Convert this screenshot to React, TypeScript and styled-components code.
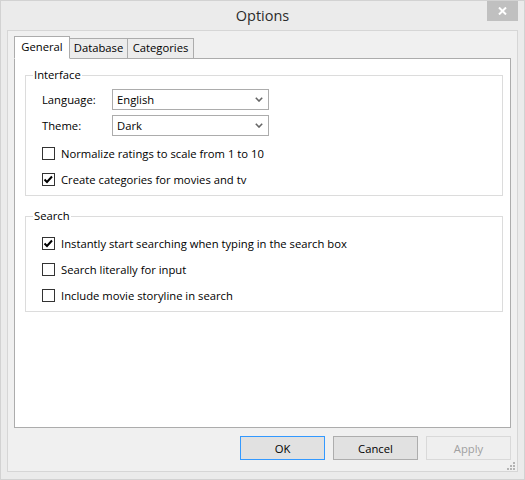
import React from "react";
import styled, { createGlobalStyle } from "styled-components";

const GlobalStyle = createGlobalStyle`
    html, body {
        margin: 0;
        padding: 0;
        background: #ebebeb;
    }
    * {
        box-sizing: border-box;
    }
`;

const FONT = `"Open Sans", "Noto Sans", sans-serif`;

const Window = styled.div`
    position: relative;
    width: 525px;
    height: 480px;
    display: flex;
    flex-direction: column;
    background: #ebebeb;
    border: 1px solid #d2d2d2;
    padding: 0 6px 7px 6px;
    font-family: ${FONT};
    font-size: 11.25px;
    color: #000;
`;

const TitleBar = styled.div`
    height: 29px;
    display: grid;
    grid-template-columns: 1fr auto 1fr;
    align-items: start;
`;

const Title = styled.div`
    grid-column: 2;
    font-size: 14.5px;
    line-height: 29px;
    color: #2b2b2b;
`;

const CloseButton = styled.div`
    grid-column: 3;
    justify-self: end;
    width: 31px;
    height: 20px;
    background: #c0c0c0;
    display: flex;
    align-items: center;
    justify-content: center;
`;

const Client = styled.div`
    position: relative;
    flex: 1;
    display: flex;
    flex-direction: column;
    background: #f0f0f0;
    border: 1px solid #d6d6d6;
    padding: 5px 6px 11px 6px;
`;

const TabStrip = styled.div`
    height: 23px;
    display: flex;
    align-items: flex-end;
    margin-bottom: -1px;
    position: relative;
    z-index: 1;
`;

const Tab = styled.div<{ selected?: boolean; width: number }>`
    width: ${props => props.width}px;
    height: ${props => (props.selected ? 23 : 21)}px;
    margin-left: ${props => (props.selected ? 0 : -1)}px;
    background: ${props => (props.selected ? "#fff" : "#ececec")};
    border: 1px solid #acacac;
    border-bottom-color: ${props => (props.selected ? "#fff" : "#acacac")};
    display: flex;
    justify-content: center;
    padding-top: ${props => (props.selected ? 2 : 1)}px;
    line-height: 16px;
    z-index: ${props => (props.selected ? 1 : 0)};
    &:first-child {
        margin-left: 0;
    }
`;

const Panel = styled.div`
    flex: 1;
    background: #fff;
    border: 1px solid #acacac;
    padding: 8px 7px 0 10px;
    display: flex;
    flex-direction: column;
    gap: 12px;
`;

const Group = styled.fieldset`
    margin: 0;
    border: 1px solid #dcdcdc;
    padding: 6px 0 3px 16px;
    min-width: 0;
`;

const Legend = styled.legend`
    margin-left: -9px;
    padding: 0 1px;
    line-height: 16px;
`;

const FieldRows = styled.div`
    display: flex;
    flex-direction: column;
    gap: 5px;
    margin-bottom: 4px;
`;

const FieldRow = styled.div`
    display: flex;
    align-items: center;
    height: 21px;
`;

const FieldLabel = styled.div`
    width: 70px;
`;

const Select = styled.div`
    width: 157px;
    height: 21px;
    border: 1px solid #acacac;
    background: #fff;
    display: flex;
    align-items: center;
    justify-content: space-between;
    padding: 0 5px 0 4px;
`;

const CheckRow = styled.div`
    display: flex;
    align-items: center;
    gap: 6px;
    height: 26px;
`;

const Box = styled.div`
    width: 13px;
    height: 13px;
    border: 1px solid #333;
    background: #fff;
    display: flex;
    align-items: center;
    justify-content: center;
`;

const ButtonRow = styled.div`
    display: flex;
    justify-content: flex-end;
    gap: 8px;
    margin-top: 8px;
`;

const Button = styled.div<{ primary?: boolean; disabled?: boolean }>`
    width: 85px;
    height: 24px;
    display: flex;
    align-items: center;
    justify-content: center;
    background: ${props => (props.disabled ? "#efefef" : "#e1e1e1")};
    border: 1px solid ${props => (props.primary ? "#3399ff" : props.disabled ? "#d9d9d9" : "#adadad")};
    color: ${props => (props.disabled ? "#a0a0a0" : "#000")};
`;

const Grip = styled.svg`
    position: absolute;
    right: 1px;
    bottom: 0;
`;

function Chevron() {
    return (
        <svg width="8" height="5" viewBox="0 0 8 5">
            <path d="M0.8 0.8 L4 4 L7.2 0.8" fill="none" stroke="#666" strokeWidth="1.6" />
        </svg>
    );
}

function Checkbox(props: { checked?: boolean; label: string }) {
    return (
        <CheckRow>
            <Box>
                {props.checked && (
                    <svg width="11" height="11" viewBox="0 0 11 11">
                        <path d="M1.5 5.5 L4 8 L9 2.5" fill="none" stroke="#000" strokeWidth="2" />
                    </svg>
                )}
            </Box>
            <span>{props.label}</span>
        </CheckRow>
    );
}

function Dropdown(props: { value: string }) {
    return (
        <Select>
            <span>{props.value}</span>
            <Chevron />
        </Select>
    );
}

export default function App() {
    return (
        <>
            <GlobalStyle />
            <Window>
                <TitleBar>
                    <Title>Options</Title>
                    <CloseButton>
                        <svg width="9" height="8" viewBox="0 0 9 8">
                            <path d="M1 0.5 L8 7.5 M8 0.5 L1 7.5" stroke="#fff" strokeWidth="2" />
                        </svg>
                    </CloseButton>
                </TitleBar>
                <Client>
                    <TabStrip>
                        <Tab selected width={56}>General</Tab>
                        <Tab width={59}>Database</Tab>
                        <Tab width={67}>Categories</Tab>
                    </TabStrip>
                    <Panel>
                        <Group>
                            <Legend>Interface</Legend>
                            <FieldRows>
                                <FieldRow>
                                    <FieldLabel>Language:</FieldLabel>
                                    <Dropdown value="English" />
                                </FieldRow>
                                <FieldRow>
                                    <FieldLabel>Theme:</FieldLabel>
                                    <Dropdown value="Dark" />
                                </FieldRow>
                            </FieldRows>
                            <Checkbox label="Normalize ratings to scale from 1 to 10" />
                            <Checkbox checked label="Create categories for movies and tv" />
                        </Group>
                        <Group>
                            <Legend>Search</Legend>
                            <Checkbox checked label="Instantly start searching when typing in the search box" />
                            <Checkbox label="Search literally for input" />
                            <Checkbox label="Include movie storyline in search" />
                        </Group>
                    </Panel>
                    <ButtonRow>
                        <Button primary>OK</Button>
                        <Button>Cancel</Button>
                        <Button disabled>Apply</Button>
                    </ButtonRow>
                    <Grip width="9" height="9" viewBox="0 0 9 9">
                        <g fill="#b4b4b4">
                            <rect x="6" y="0" width="2" height="2" />
                            <rect x="3" y="3" width="2" height="2" />
                            <rect x="6" y="3" width="2" height="2" />
                            <rect x="0" y="6" width="2" height="2" />
                            <rect x="3" y="6" width="2" height="2" />
                            <rect x="6" y="6" width="2" height="2" />
                        </g>
                    </Grip>
                </Client>
            </Window>
        </>
    );
}
